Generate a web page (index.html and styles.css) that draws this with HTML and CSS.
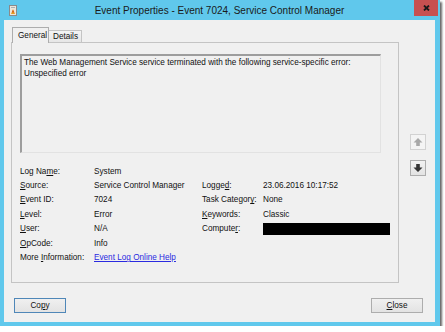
FILE: index.html
```html
<!DOCTYPE html>
<html lang="en">
  <head>
    <meta charset="UTF-8" />
    <title>Event Properties - Event 7024, Service Control Manager</title>
    <link rel="stylesheet" href="styles.css">
  </head>
  <body>
    <div class="window">
      <div class="titlebar">
        <div class="title-left">
          <svg class="app-icon" width="8" height="11" viewBox="0 0 8 11">
            <rect x="0.5" y="0.5" width="7" height="10" fill="#ebe6dc" stroke="#8a8a8a" />
            <rect x="2" y="2" width="4" height="1" fill="#b0b0b0" />
            <path d="M2 9 L4 4 L6 9 Z" fill="#e8a020" />
            <rect x="3.5" y="5.5" width="1" height="2" fill="#c03020" />
          </svg>
        </div>
        <div class="title">Event Properties - Event 7024, Service Control Manager</div>
        <div class="title-right">
          <div class="close-btn">
            <svg width="7" height="6" viewBox="0 0 7 6">
              <path d="M1 0.5 L6 5.5 M6 0.5 L1 5.5" stroke="#1a1a1a" stroke-width="1.8" />
            </svg>
          </div>
        </div>
      </div>

      <div class="client">
        <div class="main">
          <div class="tab-control">
            <div class="tabs">
              <div class="tab active">General</div>
              <div class="tab">Details</div>
            </div>
            <div class="panel">
              <div class="message">
                The Web Management Service service terminated with the following service-specific error:<br />
                Unspecified error
              </div>
              <div class="props">
                <span class="label">Log Na<u>m</u>e:</span>
                <span>System</span>
                <span></span>
                <span></span>

                <span class="label"><u>S</u>ource:</span>
                <span>Service Control Manager</span>
                <span class="label">Logge<u>d</u>:</span>
                <span>23.06.2016 10:17:52</span>

                <span class="label"><u>E</u>vent ID:</span>
                <span>7024</span>
                <span class="label">Task Categor<u>y</u>:</span>
                <span>None</span>

                <span class="label"><u>L</u>evel:</span>
                <span>Error</span>
                <span class="label"><u>K</u>eywords:</span>
                <span>Classic</span>

                <span class="label"><u>U</u>ser:</span>
                <span>N/A</span>
                <span class="label">Compute<u>r</u>:</span>
                <span class="redacted"></span>

                <span class="label"><u>O</u>pCode:</span>
                <span>Info</span>
                <span></span>
                <span></span>

                <span class="label">More <u>I</u>nformation:</span>
                <a class="link" href="#">Event Log Online Help</a>
                <span></span>
                <span></span>
              </div>
            </div>
          </div>

          <div class="nav">
            <div class="nav-btn disabled">
              <svg width="10" height="10" viewBox="0 0 10 10">
                <path d="M5 1 L9.5 5.5 L6.8 5.5 L6.8 9 L3.2 9 L3.2 5.5 L0.5 5.5 Z" fill="#a8a8a8" />
              </svg>
            </div>
            <div class="nav-btn">
              <svg width="10" height="10" viewBox="0 0 10 10">
                <path d="M5 9 L9.5 4.5 L6.8 4.5 L6.8 1 L3.2 1 L3.2 4.5 L0.5 4.5 Z" fill="#333333" />
              </svg>
            </div>
          </div>
        </div>

        <div class="buttons">
          <button class="btn default">Co<u>p</u>y</button>
          <button class="btn"><u>C</u>lose</button>
        </div>
      </div>
    </div>
  </body>
</html>
```

FILE: styles.css
```css
:root {
  --frame: #60c8ec;
  --face: #f0f0f0;
  --border: #adadad;
  --text: #111111;
  --sm: 8.2px;
}
* {
  box-sizing: border-box;
}
body {
  margin: 0;
  background: #ffffff;
  font-family: "Liberation Sans", Arial, sans-serif;
  font-size: var(--sm);
  color: var(--text);
}
.window {
  width: 440px;
  height: 326px;
  background: var(--frame);
  padding: 0 5px 4px 4px;
  display: flex;
  flex-direction: column;
  box-shadow: 2px 2px 2px rgba(0, 0, 0, 0.6);
}
.titlebar {
  height: 20px;
  display: grid;
  grid-template-columns: 1fr auto 1fr;
  align-items: start;
}
.title-left {
  padding: 5px 0 0 5px;
  display: flex;
}
.title {
  font-size: 10px;
  line-height: 21px;
  color: #1a1a1a;
}
.title-right {
  display: flex;
  justify-content: flex-end;
  margin-right: -3px;
}
.close-btn {
  width: 24px;
  height: 16px;
  background: #c75050;
  display: flex;
  align-items: center;
  justify-content: center;
}
.client {
  flex: 1;
  background: var(--face);
  padding: 7px 9px 9px 7px;
  display: flex;
  flex-direction: column;
}
.main {
  display: flex;
  gap: 11px;
}
.tab-control {
  width: 388px;
}
.tabs {
  display: flex;
  align-items: flex-end;
  height: 16px;
  margin-bottom: -1px;
  padding-left: 1px;
}
.tab {
  height: 13px;
  padding: 0 4px;
  line-height: 12px;
  border: 1px solid #c4c4c4;
  background: linear-gradient(#f4f4f4, #e6e6e6);
}
.tab.active {
  position: relative;
  z-index: 1;
  height: 16px;
  width: 37px;
  padding: 0 5px;
  line-height: 15px;
  border-color: var(--border);
  border-bottom: none;
  background: var(--face);
}
.tab:not(.active) {
  width: 33px;
  border-left: none;
}
.panel {
  height: 241px;
  border: 1px solid #c4c4c4;
  padding: 11px 0 0 8px;
}
.message {
  width: 361px;
  height: 99px;
  border-top: 2px solid #9d9d9d;
  border-left: 2px solid #9d9d9d;
  border-right: 1px solid #e2e2e2;
  border-bottom: 1px solid #e2e2e2;
  padding: 1px 2px;
  line-height: 11px;
}
.props {
  margin-top: 11px;
  display: grid;
  grid-template-columns: 74px 108px 61px 127px;
  grid-auto-rows: 14.4px;
  align-items: center;
}
.label u,
.btn u {
  text-underline-offset: 1px;
}
.link {
  color: #2a2ae0;
  text-decoration: underline;
  white-space: nowrap;
}
.redacted {
  height: 12px;
  background: #000000;
}
.nav {
  margin-top: 107px;
  display: flex;
  flex-direction: column;
  gap: 10px;
}
.nav-btn {
  width: 16px;
  height: 16px;
  border: 1px solid var(--border);
  background: linear-gradient(#f2f2f2, #e3e3e3);
  display: flex;
  align-items: center;
  justify-content: center;
}
.nav-btn.disabled {
  border-color: #d2d2d2;
  background: #f4f4f4;
}
.buttons {
  margin-top: 15px;
  display: flex;
  justify-content: space-between;
  padding: 0 3px 0 3px;
}
.btn {
  width: 52px;
  height: 15px;
  padding: 0;
  font-family: inherit;
  font-size: var(--sm);
  color: var(--text);
  border: 1px solid var(--border);
  background: linear-gradient(#f0f0f0, #e3e3e3);
}
.btn.default {
  border-color: #4f87b8;
}
```
